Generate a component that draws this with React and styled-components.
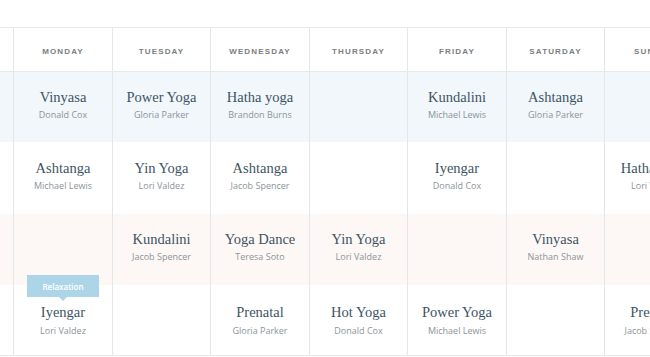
import React from "react";
import styled, { createGlobalStyle } from "styled-components";

const GlobalStyle = createGlobalStyle`
  html, body {
    margin: 0;
    padding: 0;
    background: #ffffff;
    overflow: hidden;
  }
  * {
    box-sizing: border-box;
  }
`;

const Page = styled.div`
  width: 650px;
  height: 357px;
  padding-top: 27px;
  overflow: hidden;
`;

const Timetable = styled.div`
  width: 703px;
  border-top: 1px solid #e7e9eb;
  border-bottom: 1px solid #e4e7e9;
`;

const Row = styled.div`
  display: grid;
  grid-template-columns: 13px 99px 98px 99px 98px 99px 98px 99px;
  height: ${(p) => p.$height}px;
  background: ${(p) => p.$bg || "#ffffff"};
  border-bottom: ${(p) => (p.$divider ? "1px solid #e8ebed" : "none")};
`;

const TimeCell = styled.div``;

const HeadCell = styled.div`
  border-left: 1px solid #e4e7e9;
  display: flex;
  align-items: center;
  justify-content: center;
  padding-top: 3px;
  font-family: "Liberation Sans", Arial, sans-serif;
  font-weight: 700;
  font-size: 8px;
  letter-spacing: 1.15px;
  text-transform: uppercase;
  color: #7b7e81;
`;

const ClassCell = styled.div`
  position: relative;
  border-left: 1px solid #e4e7e9;
  display: flex;
  flex-direction: column;
  align-items: center;
  justify-content: center;
  padding-bottom: ${(p) => p.$lift}px;
  white-space: nowrap;
`;

const ClassName = styled.div`
  font-family: "Liberation Serif", "Times New Roman", serif;
  font-size: 14.5px;
  line-height: 18px;
  color: #3d5464;
`;

const Teacher = styled.div`
  margin-top: ${(p) => p.$gap}px;
  font-family: "Open Sans", "Noto Sans", sans-serif;
  font-size: 9px;
  line-height: 13px;
  color: #8b949a;
`;

const Badge = styled.div`
  position: absolute;
  top: -10px;
  left: 50%;
  transform: translateX(-50%);
  width: 72px;
  height: 22px;
  background: #acd6e8;
  color: #ffffff;
  font-family: "Open Sans", "Noto Sans", sans-serif;
  font-weight: 600;
  font-size: 8px;
  display: flex;
  align-items: center;
  justify-content: center;

  &::after {
    content: "";
    position: absolute;
    left: 50%;
    bottom: -4px;
    margin-left: -4px;
    border-left: 4px solid transparent;
    border-right: 4px solid transparent;
    border-top: 4px solid #acd6e8;
  }
`;

const days = [
  "Monday",
  "Tuesday",
  "Wednesday",
  "Thursday",
  "Friday",
  "Saturday",
  "Sunday",
];

const rows = [
  {
    bg: "#f1f7fb",
    height: 70,
    lift: 6,
    gap: 2,
    classes: [
      ["Vinyasa", "Donald Cox"],
      ["Power Yoga", "Gloria Parker"],
      ["Hatha yoga", "Brandon Burns"],
      null,
      ["Kundalini", "Michael Lewis"],
      ["Ashtanga", "Gloria Parker"],
      null,
    ],
  },
  {
    bg: "#ffffff",
    height: 72,
    lift: 6,
    gap: 2,
    classes: [
      ["Ashtanga", "Michael Lewis"],
      ["Yin Yoga", "Lori Valdez"],
      ["Ashtanga", "Jacob Spencer"],
      null,
      ["Iyengar", "Donald Cox"],
      null,
      ["Hatha yoga", "Lori Valdez"],
    ],
  },
  {
    bg: "#fdf8f5",
    height: 71,
    lift: 6,
    gap: 2,
    classes: [
      null,
      ["Kundalini", "Jacob Spencer"],
      ["Yoga Dance", "Teresa Soto"],
      ["Yin Yoga", "Lori Valdez"],
      null,
      ["Vinyasa", "Nathan Shaw"],
      null,
    ],
  },
  {
    bg: "#ffffff",
    height: 70,
    lift: 0,
    gap: 3,
    classes: [
      ["Iyengar", "Lori Valdez", "Relaxation"],
      null,
      ["Prenatal", "Gloria Parker"],
      ["Hot Yoga", "Donald Cox"],
      ["Power Yoga", "Michael Lewis"],
      null,
      ["Prenatal", "Jacob Spencer"],
    ],
  },
];

export default function App() {
  return (
    <Page>
      <GlobalStyle />
      <Timetable>
        <Row $height={44} $divider>
          <TimeCell />
          {days.map((day) => (
            <HeadCell key={day}>{day}</HeadCell>
          ))}
        </Row>
        {rows.map((row, i) => (
          <Row key={i} $height={row.height} $bg={row.bg}>
            <TimeCell />
            {row.classes.map((c, j) => (
              <ClassCell key={j} $lift={row.lift}>
                {c && c[2] && <Badge>{c[2]}</Badge>}
                {c && <ClassName>{c[0]}</ClassName>}
                {c && <Teacher $gap={row.gap}>{c[1]}</Teacher>}
              </ClassCell>
            ))}
          </Row>
        ))}
      </Timetable>
    </Page>
  );
}
